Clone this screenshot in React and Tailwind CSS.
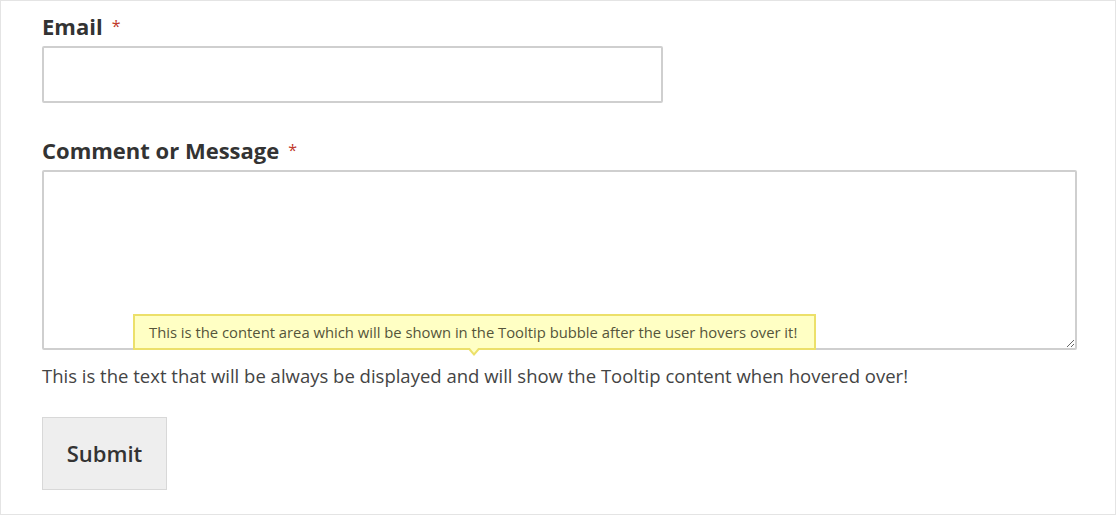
import React from "react";

function Field({ label, children, className = "" }) {
  return (
    <div className={`flex flex-col gap-[3px] ${className}`}>
      <label className="text-[22px] font-bold leading-[34px] text-[#333]">
        {label}<span className="ml-[9px] text-[16px] align-top text-[#c0392b] font-normal">*</span>
      </label>
      {children}
    </div>
  );
}

export default function App() {
  return (
    <div
      className="w-[1116px] h-[515px] border border-[#e4e4e4] bg-white pl-[41px] pt-[8px] flex flex-col items-start text-[#333]"
      style={{ fontFamily: '"Open Sans", "Noto Sans", sans-serif' }}
    >
      <Field label="Email">
        <input
          type="text"
          className="w-[621px] h-[57px] border-2 border-[#cfcfcf] rounded-[2px] bg-white outline-none"
        />
      </Field>

      <Field label="Comment or Message" className="mt-[30px]">
        <textarea className="w-[1035px] h-[180px] border-2 border-[#cfcfcf] rounded-[2px] bg-white outline-none" />
      </Field>

      {/* help text with tooltip */}
      <div className="relative mt-[8px]">
        <p className="text-[18.5px] leading-[36px] text-[#444] whitespace-nowrap">
          This is the text that will be always be displayed and will show the Tooltip content when hovered over!
        </p>
        <div className="absolute left-[91px] bottom-[calc(100%+8px)]">
          <div className="w-[683px] h-[36px] flex items-center pl-[14px] border-2 border-[#ece06a] bg-[#ffffc4] text-[14.8px] text-[#55553a] whitespace-nowrap">
            This is the content area which will be shown in the Tooltip bubble after the user hovers over it!
          </div>
          <div className="absolute left-[334px] top-[34px] w-0 h-0 border-l-[7px] border-r-[7px] border-t-[8px] border-l-transparent border-r-transparent border-t-[#ece06a]" />
          <div className="absolute left-[336px] top-[33px] w-0 h-0 border-l-[5px] border-r-[5px] border-t-[6px] border-l-transparent border-r-transparent border-t-[#ffffc4]" />
        </div>
      </div>

      <button className="mt-[23px] w-[125px] h-[73px] border border-[#d8d8d8] bg-[#eeeeee] text-[22px] font-semibold text-[#333]">
        Submit
      </button>
    </div>
  );
}
